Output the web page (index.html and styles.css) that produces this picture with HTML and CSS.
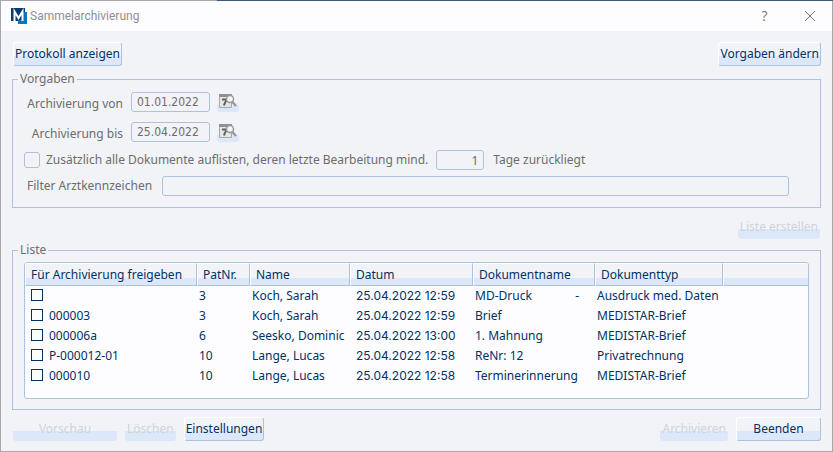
FILE: index.html
```html
<!DOCTYPE html>
<html lang="de">
<head>
<meta charset="utf-8">
<title>Sammelarchivierung</title>
<link rel="stylesheet" href="styles.css">
</head>
<body>
<svg class="sprite" aria-hidden="true">
  <symbol id="pick-date" viewBox="0 0 22 20">
    <path d="M0 13h22v5l-2 2H2l-2-2z" fill="#dce7fa"/>
    <path d="M2.500 2.500h12v13h-12z" fill="#e6e6e6" stroke="#a8a8a8"/>
    <path d="M2 2h13v3H2z" fill="#909090"/>
    <path d="M5 7.500h5c-1 2-2.500 3-3 6" fill="none" stroke="#606060" stroke-width="2"/>
    <circle cx="13" cy="7" r="3.500" fill="#f6f6f6" stroke="#999" stroke-width="1.500"/>
    <path d="M15 9.500l4 4.500" stroke="#999" stroke-width="2.500"/>
  </symbol>
</svg>
<div class="window">
  <header class="titlebar">
    <svg class="logo" viewBox="0 0 17 17" aria-hidden="true">
      <path d="M0 0h14v13H0z" fill="#0b3b6c"/>
      <path d="M12 4h4v12H7v-4h5z" fill="#0c74bd"/>
      <path d="M3.500 13V3.500L7.500 10 11.500 3.500V13" fill="none" stroke="#fff" stroke-width="2"/>
    </svg>
    <h1>Sammelarchivierung</h1>
    <button class="caption" aria-label="Hilfe">?</button>
    <button class="caption" aria-label="Schließen">
      <svg width="12" height="12" viewBox="0 0 12 12"><path d="M1 1l10 10M11 1L1 11" stroke="#777" fill="none"/></svg>
    </button>
  </header>
  <main>
    <div class="bar top">
      <button class="btn">Protokoll anzeigen</button>
      <button class="btn end">Vorgaben ändern</button>
    </div>
    <fieldset class="options">
      <legend>Vorgaben</legend>
      <div class="row date">
        <label for="from">Archivierung von</label>
        <input id="from" type="text" value="01.01.2022">
        <button class="pick" aria-label="Datum von wählen"><svg width="22" height="20"><use href="#pick-date"/></svg></button>
      </div>
      <div class="row date">
        <label for="to">Archivierung bis</label>
        <input id="to" type="text" value="25.04.2022">
        <button class="pick" aria-label="Datum bis wählen"><svg width="22" height="20"><use href="#pick-date"/></svg></button>
      </div>
      <div class="row extra">
        <input id="all" type="checkbox">
        <label for="all">Zusätzlich alle Dokumente auflisten, deren letzte Bearbeitung mind.</label>
        <input id="days" class="days" type="text" value="1">
        <label for="days">Tage zurückliegt</label>
      </div>
      <div class="row filter">
        <label for="filter">Filter Arztkennzeichen</label>
        <input id="filter" type="text">
      </div>
    </fieldset>
    <div class="bar create">
      <button class="btn end" disabled>Liste erstellen</button>
    </div>
    <fieldset class="list">
      <legend>Liste</legend>
      <div class="grid">
        <table>
          <colgroup><col class="c-release"><col class="c-nr"><col class="c-name"><col class="c-date"><col class="c-doc"><col class="c-type"><col></colgroup>
          <thead>
            <tr><th>Für Archivierung freigeben</th><th>PatNr.</th><th>Name</th><th>Datum</th><th>Dokumentname</th><th>Dokumenttyp</th><th></th></tr>
          </thead>
          <tbody>
            <tr><td><label><input type="checkbox" aria-label="MD-Druck"></label></td><td>3</td><td>Koch, Sarah</td><td>25.04.2022 12:59</td><td><span class="split"><span>MD-Druck</span><span>-</span></span></td><td>Ausdruck med. Daten</td><td></td></tr>
            <tr><td><label><input type="checkbox">000003</label></td><td>3</td><td>Koch, Sarah</td><td>25.04.2022 12:59</td><td>Brief</td><td>MEDISTAR-Brief</td><td></td></tr>
            <tr><td><label><input type="checkbox">000006a</label></td><td>6</td><td>Seesko, Dominic</td><td>25.04.2022 13:00</td><td>1. Mahnung</td><td>MEDISTAR-Brief</td><td></td></tr>
            <tr><td><label><input type="checkbox">P-000012-01</label></td><td>10</td><td>Lange, Lucas</td><td>25.04.2022 12:58</td><td>ReNr: 12</td><td>Privatrechnung</td><td></td></tr>
            <tr><td><label><input type="checkbox">000010</label></td><td>10</td><td>Lange, Lucas</td><td>25.04.2022 12:58</td><td>Terminerinnerung</td><td>MEDISTAR-Brief</td><td></td></tr>
          </tbody>
        </table>
      </div>
    </fieldset>
    <div class="bar bottom">
      <button class="btn wide" disabled>Vorschau</button>
      <button class="btn" disabled>Löschen</button>
      <button class="btn">Einstellungen</button>
      <button class="btn end" disabled>Archivieren</button>
      <button class="btn medium">Beenden</button>
    </div>
  </main>
</div>
</body>
</html>
```
FILE: styles.css
```css
* { box-sizing: border-box; }

:root {
  --line: #abc3df;
  --tint: #dce7fa;
  --face: #f1f3f7;
  --navy: #003264;
  --gray: #6d6d6d;
}

body {
  margin: 0;
  padding: 1px;
  min-height: 100vh;
  display: flex;
  background: linear-gradient(90deg, #a8a8a8 26%, #3f5878 26%) top / 100% 1px no-repeat, #a8a8a8;
  font: 12px/16px "Noto Sans", sans-serif;
  color: var(--gray);
}

.sprite { position: absolute; width: 0; height: 0; }

button, input { font: inherit; color: inherit; }

button { background: none; border: 0; padding: 0; }

.window { flex: 1; background: var(--face); }

.titlebar {
  display: flex;
  align-items: center;
  height: 30px;
  padding: 0 0 0 10px;
  background: #fdfdff;
  color: #8f8f8f;
}

.logo { width: 17px; height: 17px; margin-right: 2px; }

.titlebar h1 {
  flex: 1;
  margin: 0;
  font: 12px/16px Roboto, "Noto Sans", sans-serif;
}

.caption {
  display: flex;
  align-items: center;
  justify-content: center;
  width: 45px;
  height: 30px;
  color: #777;
  font: 14px/16px "Open Sans", sans-serif;
}

main { padding: 11px 11px 0; }

.bar { display: flex; gap: 8px; padding-left: 1px; }
.end { margin-left: auto; }

.btn {
  height: 24px;
  padding: 0 1px;
  border: 1px solid var(--line);
  border-top-color: #fff;
  border-left-color: #fff;
  border-radius: 3px;
  background: linear-gradient(var(--face) 60%, var(--tint) 60%) border-box;
  color: var(--navy);
  white-space: nowrap;
}

.btn:disabled { border-color: transparent; color: #d0d3da; }
.wide { width: 104px; }
.medium { width: 85px; }

fieldset {
  margin: 0;
  min-width: 0;
  border: 1px solid var(--line);
}

legend { padding: 0 2px; margin-left: -6px; }

.options { margin-top: 5px; padding: 5px 31px 11px 11px; }
.list { padding: 4px 11px 10px; }

.row { display: flex; align-items: center; white-space: nowrap; }

.row input[type="text"] {
  height: 20px;
  width: 79px;
  padding: 0 5px;
  border: 1px solid var(--line);
  border-radius: 3px;
  background: transparent;
}

.date { height: 30px; align-items: flex-start; }
.date label { width: 99px; padding-top: 4px; text-align: right; }
.row.date input { margin: 0 7px 0 8px; font-family: "DejaVu Sans Condensed", "DejaVu Sans", sans-serif; }
.pick { height: 20px; }
.pick svg { display: block; }

.extra { height: 20px; margin-top: -2px; }

input[type="checkbox"] { appearance: none; margin: 0; border: 1px solid var(--line); }

.extra input[type="checkbox"] {
  width: 16px;
  height: 16px;
  margin-right: 6px;
  border-radius: 3px;
}

.row input.days { width: 48px; margin: 0 9px 0 8px; text-align: right; }

.filter { margin-top: 6px; padding-left: 3px; gap: 10px; }
.row.filter input { flex: 1; }

.create { margin: 7px 0 3px; padding-right: 1px; }

.grid {
  height: 137px;
  border: 1px solid var(--line);
  border-radius: 3px;
  background: #fdfdff;
  overflow: hidden;
  color: var(--navy);
}

table { width: 100%; table-layout: fixed; border-collapse: separate; border-spacing: 0; }
.c-release { width: 172px; }
.c-nr { width: 53px; }
.c-name { width: 100px; }
.c-date { width: 123px; }
.c-doc { width: 122px; }
.c-type { width: 128px; }

th {
  height: 23px;
  padding: 0 5px;
  border: 1px solid var(--line);
  border-top-color: #fff;
  border-left-color: #fff;
  background: linear-gradient(var(--face) 65%, var(--tint) 65%);
  font-weight: normal;
  text-align: left;
}

th:last-child { border-right: 0; }

td { height: 20px; padding: 0 2px; white-space: nowrap; }
td:first-child { padding-left: 6px; }
td:nth-child(4) { padding-left: 6px; font-family: Inter, "Noto Sans", sans-serif; }

td label { display: flex; align-items: center; gap: 6px; }
td input[type="checkbox"] { width: 12px; height: 12px; margin-bottom: 3px; border-color: var(--navy); }

.split { display: flex; justify-content: space-between; padding-right: 14px; }

.bottom { margin-top: 7px; }
```
